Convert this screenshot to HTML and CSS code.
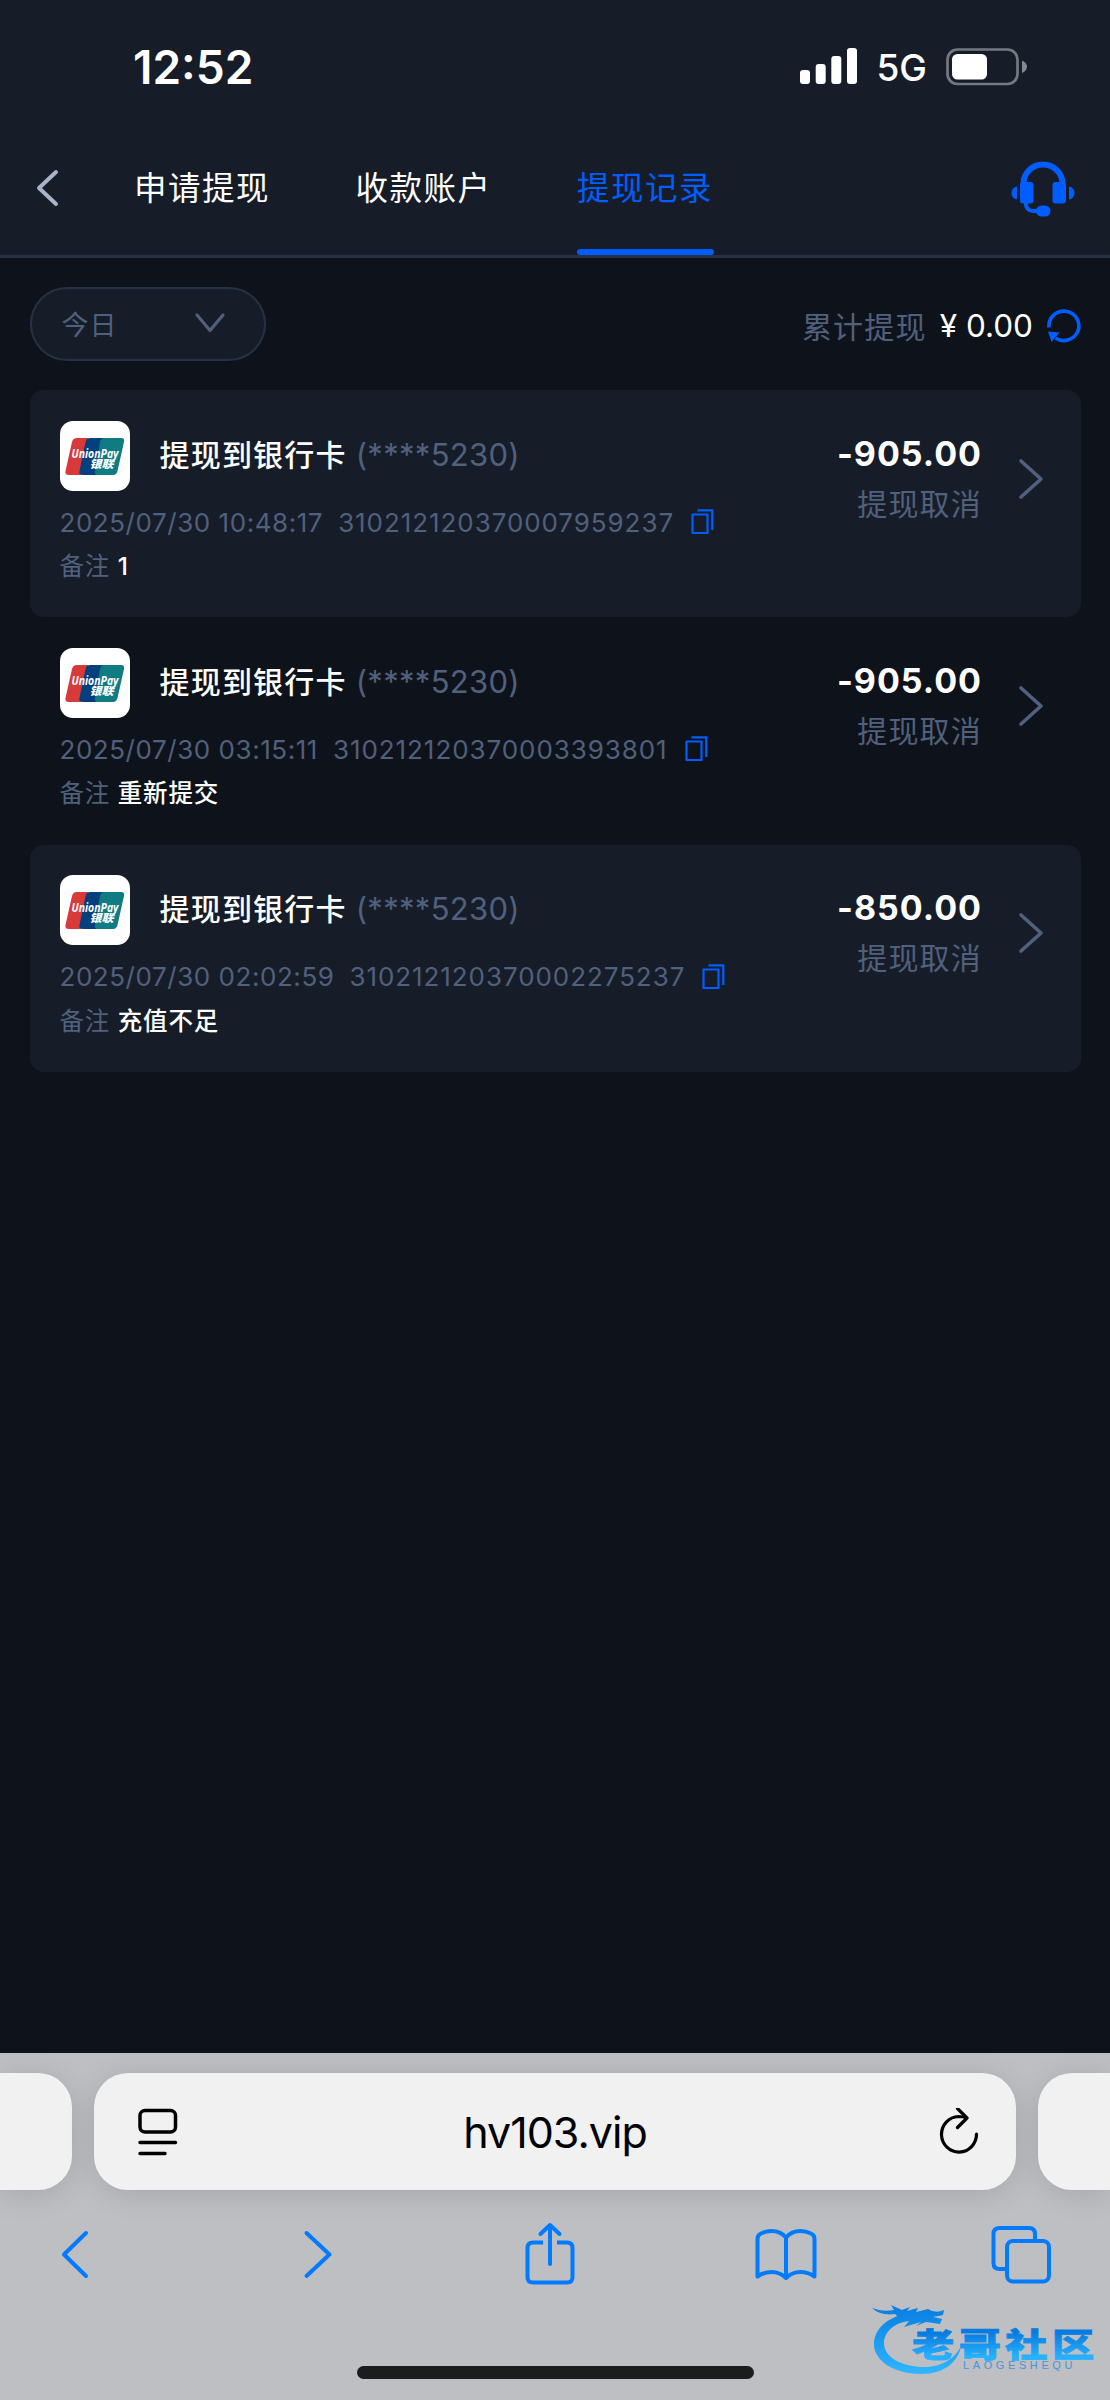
FILE: index.html
```html
<!DOCTYPE html>
<html lang="zh-CN">
<head>
  <meta charset="UTF-8">
  <meta name="viewport" content="width=device-width, initial-scale=1.0">
  <title>提现记录</title>
  <link rel="stylesheet" href="styles.css">
</head>
<body>
  <!-- Shared icons -->
  <svg class="sprite" width="0" height="0">
    <symbol id="unionpay" viewBox="0 0 70 70">
      <path d="M12 17H28L21 54H9Q4.500 54 5.500 50L12 21Q13 17 17 17Z" fill="#d73a38"/>
      <path d="M29 17H45L37 54H23Q18.500 54 19.500 50L25.500 21Q26.500 17 30 17Z" fill="#04407e"/>
      <path d="M44 17H61Q65 17 64 21L57.500 50Q56.500 54 53 54H38Q34 54 35 50L40 21Q41 17 44 17Z" fill="#0f7c83"/>
    </symbol>
    <symbol id="copy" viewBox="0 0 24 26">
      <path d="M2.500 5.500H17.500V24H2.500Z M7.500 1.300H22.300V21" fill="none" stroke="#005dfe" stroke-width="2.200" stroke-linejoin="round"/>
    </symbol>
    <symbol id="arrow" viewBox="0 0 26 42">
      <path d="M3 3L23 21L3 39" fill="none" stroke="#50607d" stroke-width="3.600" stroke-linecap="round" stroke-linejoin="round"/>
    </symbol>
  </svg>

  <header class="header">
    <div class="status-bar">
      <span class="time">12:52</span>
      <div class="status-icons">
        <svg width="58" height="38" viewBox="0 0 58 38" fill="#fff">
          <rect x="0" y="22" width="10" height="14" rx="3"/>
          <rect x="15.700" y="16" width="10" height="20" rx="3"/>
          <rect x="31.300" y="8" width="10" height="28" rx="3"/>
          <rect x="47" y="0" width="10" height="36" rx="3"/>
        </svg>
        <span class="network">5G</span>
        <svg width="82" height="38" viewBox="0 0 82 38">
          <rect x="1.500" y="1.500" width="70" height="34.500" rx="10" fill="none" stroke="#747981" stroke-width="2.700"/>
          <rect x="6" y="6" width="35" height="25.500" rx="5.500" fill="#fff"/>
          <path d="M76 12.500Q81 15 81 18.700T76 25Z" fill="#858a91"/>
        </svg>
      </div>
    </div>
    <nav class="nav">
      <svg class="back" width="26" height="40" viewBox="0 0 26 40">
        <path d="M21 3L4 19L21 35" fill="none" stroke="#a9b4c8" stroke-width="4" stroke-linecap="round" stroke-linejoin="round"/>
      </svg>
      <div class="tabs">
        <a class="tab">申请提现</a>
        <a class="tab">收款账户</a>
        <a class="tab active">提现记录</a>
      </div>
      <svg class="service" width="64" height="58" viewBox="0 0 64 58" fill="#005dfe">
        <path d="M12.500 27V23.500A19.500 19 0 0 1 51.500 23.500V27" fill="none" stroke="#005dfe" stroke-width="6"/>
        <rect x="9" y="22" width="13.500" height="21.500" rx="3"/>
        <rect x="41.500" y="22" width="13.500" height="21.500" rx="3"/>
        <path d="M6 26.500V39.500Q.5 38.500 .5 33T6 26.500Z M58 26.500V39.500Q63.500 38.500 63.500 33T58 26.500Z"/>
        <path d="M14.500 42Q15 51 22 51H28" fill="none" stroke="#005dfe" stroke-width="4"/>
        <rect x="25" y="45.500" width="14.500" height="11" rx="5.500"/>
      </svg>
    </nav>
  </header>

  <main class="content">
    <div class="filter-row">
      <div class="date-select">
        <span>今日</span>
        <svg width="32" height="22" viewBox="0 0 32 22">
          <path d="M3 3L16 18.500L29 3" fill="none" stroke="#50607d" stroke-width="3.200" stroke-linecap="round" stroke-linejoin="round"/>
        </svg>
      </div>
      <div class="total">
        <span class="total-label">累计提现</span>
        <span class="total-value">¥ 0.00</span>
        <svg width="34" height="34" viewBox="0 0 34 34">
          <path d="M2 18.500A15 14.700 0 1 1 8.500 29" fill="none" stroke="#005dfe" stroke-width="3.600"/>
          <path d="M1 22.500L12.500 23.500L4.500 33Z" fill="#005dfe"/>
        </svg>
      </div>
    </div>

    <div class="list">
      <div class="record">
        <div class="info">
          <div class="bank">
            <svg class="bank-logo" viewBox="0 0 70 70">
              <use href="#unionpay"/>
              <text x="11.500" y="36.500" class="up-en" textLength="47" lengthAdjust="spacingAndGlyphs">UnionPay</text>
              <text x="29.500" y="46.500" class="up-cn" textLength="24" lengthAdjust="spacingAndGlyphs">银联</text>
            </svg>
            <span class="bank-name">提现到银行卡</span>
            <span class="bank-no">(****5230)</span>
          </div>
          <div class="meta">
            <span>2025/07/30 10:48:17</span>
            <span class="order">310212120370007959237</span>
            <svg class="copy"><use href="#copy"/></svg>
          </div>
          <div class="remark">备注 <b>1</b></div>
        </div>
        <div class="result">
          <div class="amount">-905.00</div>
          <div class="state">提现取消</div>
        </div>
        <svg class="arrow"><use href="#arrow"/></svg>
      </div>

      <div class="record">
        <div class="info">
          <div class="bank">
            <svg class="bank-logo" viewBox="0 0 70 70">
              <use href="#unionpay"/>
              <text x="11.500" y="36.500" class="up-en" textLength="47" lengthAdjust="spacingAndGlyphs">UnionPay</text>
              <text x="29.500" y="46.500" class="up-cn" textLength="24" lengthAdjust="spacingAndGlyphs">银联</text>
            </svg>
            <span class="bank-name">提现到银行卡</span>
            <span class="bank-no">(****5230)</span>
          </div>
          <div class="meta">
            <span>2025/07/30 03:15:11</span>
            <span class="order">310212120370003393801</span>
            <svg class="copy"><use href="#copy"/></svg>
          </div>
          <div class="remark">备注 <b>重新提交</b></div>
        </div>
        <div class="result">
          <div class="amount">-905.00</div>
          <div class="state">提现取消</div>
        </div>
        <svg class="arrow"><use href="#arrow"/></svg>
      </div>

      <div class="record">
        <div class="info">
          <div class="bank">
            <svg class="bank-logo" viewBox="0 0 70 70">
              <use href="#unionpay"/>
              <text x="11.500" y="36.500" class="up-en" textLength="47" lengthAdjust="spacingAndGlyphs">UnionPay</text>
              <text x="29.500" y="46.500" class="up-cn" textLength="24" lengthAdjust="spacingAndGlyphs">银联</text>
            </svg>
            <span class="bank-name">提现到银行卡</span>
            <span class="bank-no">(****5230)</span>
          </div>
          <div class="meta">
            <span>2025/07/30 02:02:59</span>
            <span class="order">310212120370002275237</span>
            <svg class="copy"><use href="#copy"/></svg>
          </div>
          <div class="remark">备注 <b>充值不足</b></div>
        </div>
        <div class="result">
          <div class="amount">-850.00</div>
          <div class="state">提现取消</div>
        </div>
        <svg class="arrow"><use href="#arrow"/></svg>
      </div>
    </div>
  </main>

  <footer class="browser">
    <div class="address-row">
      <div class="side-tab left"></div>
      <div class="address">
        <svg width="40" height="48" viewBox="0 0 40 48" fill="none" stroke="#000" stroke-width="3.500" stroke-linecap="round">
          <rect x="2" y="2.500" width="35.500" height="21.500" rx="5"/>
          <path d="M2 34.500H37.500M2 45.500H27"/>
        </svg>
        <span class="url">hv103.vip</span>
        <svg width="40" height="48" viewBox="0 0 40 48" fill="none" stroke="#000" stroke-width="3.200" stroke-linecap="round" stroke-linejoin="round">
          <path d="M37.500 26A17.500 17.800 0 1 1 19.500 8.500Q24 8.500 28 10M18.500 .5L28 10L18.500 19.500"/>
        </svg>
      </div>
      <div class="side-tab right"></div>
    </div>
    <div class="toolbar">
      <svg viewBox="0 0 60 64"><path d="M41 11L19 32.500L41 54"/></svg>
      <svg viewBox="0 0 60 64"><path d="M24.500 11L47.500 32.500L24.500 54"/></svg>
      <svg viewBox="0 0 60 64">
        <path d="M32 42V4M22.500 12L32 3L41.500 12"/>
        <path class="butt" d="M25 20.500H15Q9.500 20.500 9.500 26V55Q9.500 60.500 15 60.500H49Q54.500 60.500 54.500 55V26Q54.500 20.500 49 20.500H39"/>
      </svg>
      <svg viewBox="0 0 60 64">
        <path d="M2.500 54.500V17Q2.500 13 6 11.500Q11 9 16.500 9Q25.500 9 31 15.500Q36.500 9 45.500 9Q51 9 56 11.500Q59.500 13 59.500 17V54.500Q53 50 45.500 50Q37 50 31 56Q25 50 16.500 50Q9 50 2.500 54.500ZM31 15.500V56"/>
      </svg>
      <svg viewBox="0 0 60 64">
        <path class="butt" d="M15.500 47H8.500Q2.500 47 2.500 41V12Q2.500 6 8.500 6H38Q44 6 44 12V19"/>
        <rect x="16" y="19" width="42" height="40.500" rx="6"/>
      </svg>
    </div>
    <div class="home-indicator"></div>
    <svg class="watermark" width="230" height="80" viewBox="0 0 230 80">
      <defs>
        <linearGradient id="blue" x1="0" y1="0" x2="0" y2="80" gradientUnits="userSpaceOnUse">
          <stop offset=".1" stop-color="#087fe2"/>
          <stop offset=".9" stop-color="#2fb5ff"/>
        </linearGradient>
        <linearGradient id="blue-text" x1="0" y1="0" x2="0" y2="1">
          <stop offset=".3" stop-color="#077ce0"/>
          <stop offset=".8" stop-color="#27b0fc"/>
        </linearGradient>
      </defs>
      <g fill="url(#blue)">
        <path d="M35 14C16 18 4 30 4 44C4 61 24 74 52 74C73 74 88 63 91 46C84 61 68 67 55 67C31 67 14 57 14 43C14 32 25 22 40 21Z"/>
        <path d="M2 8Q12 12 24 10L21 5L32 10L40 7L37 11L48 8L46 12L58 9Q66 14 74 10L73 15L63 17L72 19L70 24L56 22L46 26L51 22L34 27L39 21L29 18L25 14Q10 16 2 8Z"/>
      </g>
      <text x="0" y="0" class="wm-cn" fill="url(#blue-text)" stroke="url(#blue-text)" transform="translate(42 56.500) scale(1.3 1)">老哥社区</text>
      <text x="93" y="68.500" class="wm-en">LAOGESHEQU</text>
    </svg>
  </footer>
</body>
</html>
```
FILE: styles.css
```css
* {
  box-sizing: border-box;
}

body {
  margin: 0;
  width: 1110px;
  height: 2400px;
  display: flex;
  flex-direction: column;
  background-color: #0e131b;
  color: #fff;
  font-family: Inter, "Noto Sans CJK SC", sans-serif;
  overflow: hidden;
}

svg {
  display: block;
  flex-shrink: 0;
}

.sprite {
  position: absolute;
}

/* Header */
.header {
  height: 258px;
  background-color: #161d28;
  border-bottom: 3px solid #263243;
}

.status-bar {
  height: 122px;
  padding: 11px 82px 0 133px;
  display: flex;
  justify-content: space-between;
  align-items: center;
}

.time {
  font-size: 46px;
  font-weight: 600;
  line-height: 56px;
  letter-spacing: 0;
}

.status-icons {
  display: flex;
  align-items: center;
}

.network {
  margin: 2px 19px 0 18px;
  font-size: 37px;
  font-weight: 500;
  line-height: 44px;
}

.nav {
  height: 133px;
  padding: 0 35px;
  display: flex;
  align-items: center;
}

.tabs {
  height: 133px;
  margin-left: 73px;
  display: flex;
  gap: 84.5px;
}

.tab {
  width: 137px;
  border-bottom: 6px solid transparent;
  font-size: 32.5px;
  line-height: 134px;
  letter-spacing: 1.5px;
  white-space: nowrap;
}

.tab.active {
  position: relative;
  color: #005dfe;
}

.tab.active::after {
  content: "";
  position: absolute;
  left: 0;
  bottom: -6px;
  width: 137px;
  height: 6px;
  border-radius: 3px;
  background-color: #005dfe;
}

.service {
  margin-left: auto;
}

/* Filter */
.content {
  flex: 1;
  padding: 29px 29px 0 29.5px;
}

.filter-row {
  height: 103px;
  display: flex;
  justify-content: space-between;
  align-items: flex-start;
}

.date-select {
  width: 236.5px;
  height: 74px;
  padding: 0 38px 2px 30px;
  display: flex;
  justify-content: space-between;
  align-items: center;
  background-color: #161d28;
  border: 2.5px solid #263243;
  border-radius: 37px;
  color: #50607d;
  font-size: 27px;
  letter-spacing: 1px;
}

.total {
  height: 78px;
  display: flex;
  align-items: center;
  font-size: 30px;
}

.total-label {
  margin-top: -3px;
  color: #50607d;
  letter-spacing: 1.2px;
}

.total-value {
  margin: -1px 14px 0 13px;
  font-size: 31.5px;
}

/* Records */
.record {
  height: 227.4px;
  padding: 30.5px 37px 0 30px;
  display: flex;
  border-radius: 14px;
}

.record:nth-child(odd) {
  background-color: #161d28;
}

.info {
  flex: 1;
}

.bank {
  display: flex;
  align-items: center;
  font-size: 30px;
}

.bank-logo {
  width: 70px;
  height: 70px;
  margin-right: 30px;
  background-color: #fff;
  border-radius: 13px;
}

.up-en {
  font: italic bold 12px "Open Sans", sans-serif;
  fill: #fff;
}

.up-cn {
  font: italic 900 11px "Noto Sans CJK SC", sans-serif;
  fill: #fff;
}

.bank-name {
  margin-top: -6px;
  font-weight: 500;
  letter-spacing: 1.2px;
}

.bank-no {
  margin: -3px 0 0 9px;
  color: #50607d;
  font-size: 31px;
  letter-spacing: 0.3px;
}

.meta {
  height: 38px;
  margin-top: 12.5px;
  display: flex;
  align-items: center;
  color: #50607d;
  font-size: 26px;
  letter-spacing: 0.55px;
}

.order {
  margin-left: 15px;
  letter-spacing: 0.93px;
}

.copy {
  width: 24px;
  height: 26px;
  margin-left: 16px;
}

.remark {
  margin-top: 6px;
  color: #50607d;
  font-size: 24.5px;
  line-height: 38px;
  letter-spacing: 0.8px;
}

.remark b {
  color: #fff;
  font-weight: 500;
}

.result {
  text-align: right;
}

.amount {
  margin-top: 11px;
  font-size: 34px;
  font-weight: 700;
  line-height: 44px;
  letter-spacing: 1px;
}

.state {
  margin-top: 6px;
  color: #50607d;
  font-size: 30px;
  line-height: 44px;
  letter-spacing: 1.2px;
}

.arrow {
  width: 26px;
  height: 42px;
  margin: 37px 0 0 36px;
}

/* Browser bar */
.browser {
  position: relative;
  height: 347px;
  padding-top: 20px;
  background-color: #bebfc3;
  overflow: hidden;
}

.address-row {
  display: flex;
  gap: 22px;
}

.address,
.side-tab {
  height: 117px;
  background-color: #f1f1f2;
  box-shadow: 0 4px 30px rgba(0, 0, 0, 0.13);
}

.side-tab {
  width: 72px;
}

.side-tab.left {
  border-radius: 0 34px 34px 0;
}

.side-tab.right {
  border-radius: 34px 0 0 34px;
}

.address {
  flex: 1;
  padding: 0 37px 0 44px;
  display: flex;
  justify-content: space-between;
  align-items: center;
  border-radius: 34px;
  color: #000;
}

.url {
  margin-right: 7px;
  font-size: 43px;
  letter-spacing: -1px;
}

.toolbar {
  height: 64px;
  margin-top: 32px;
  padding: 0 59px 0 45px;
  display: flex;
  justify-content: space-between;
}

.toolbar svg {
  width: 60px;
  height: 64px;
  overflow: visible;
  fill: none;
  stroke: #007aff;
  stroke-width: 4;
  stroke-linecap: round;
  stroke-linejoin: round;
}

.toolbar .butt {
  stroke-linecap: butt;
}

.home-indicator {
  width: 397px;
  height: 13px;
  margin: 80px auto 0;
  background-color: #1c1c1c;
  border-radius: 7px;
}

.watermark {
  position: absolute;
  left: 870px;
  top: 247px;
}

.wm-cn {
  font: 900 32.5px "Noto Sans CJK SC", sans-serif;
  letter-spacing: 3.4px;
  stroke-width: 0.8px;
}

.wm-en {
  font: 11px "Liberation Sans", sans-serif;
  fill: #4596d8;
  letter-spacing: 3.6px;
}
```
